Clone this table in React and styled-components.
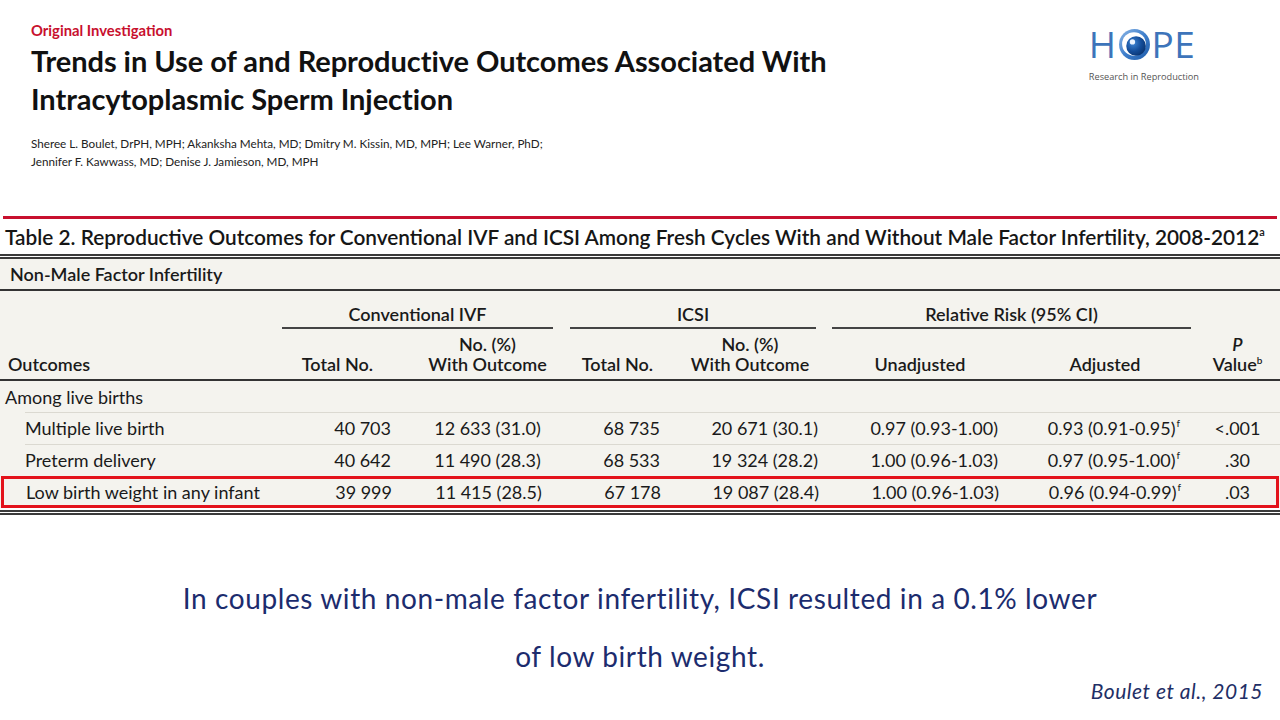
import React from "react";
import styled, { createGlobalStyle } from "styled-components";

const GlobalStyle = createGlobalStyle`
  html, body {
    margin: 0;
    padding: 0;
    background: #fff;
  }
  * {
    box-sizing: border-box;
  }
`;

const COLS = "282px 128px 155px 110px 150px 190px 180px 1fr";

const Slide = styled.div`
  width: 1280px;
  height: 720px;
  overflow: hidden;
  background: #fff;
  font-family: Lato, "Liberation Sans", sans-serif;
  color: #1a1a1a;
`;

const Header = styled.header`
  display: flex;
  justify-content: space-between;
  padding: 20px 81px 0 31px;
  height: 216px;
`;

const Kicker = styled.div`
  color: #c8102e;
  font-weight: 700;
  font-size: 14.8px;
  line-height: 20px;
`;

const Title = styled.h1`
  margin: 2px 0 0;
  font-size: 29px;
  line-height: 38px;
  font-weight: 700;
  letter-spacing: -0.05px;
  color: #111;
`;

const Authors = styled.p`
  margin: 16px 0 0;
  font-size: 11.7px;
  line-height: 18px;
  color: #222;
`;

const Logo = styled.div`
  display: flex;
  flex-direction: column;
  align-items: flex-start;
  padding-top: 4px;
`;

const LogoWord = styled.div`
  display: flex;
  align-items: center;
  height: 40px;
  font-family: "Open Sans", sans-serif;
  font-size: 37px;
  line-height: 40px;
  color: #3d74ba;
  letter-spacing: 0.4px;
`;

const LogoSub = styled.div`
  font-family: "Open Sans", sans-serif;
  font-size: 9.2px;
  line-height: 14px;
  color: #555;
  margin-top: 6px;
`;

const Rule = styled.div`
  height: 3px;
  margin: 0 3px 0 3px;
  background: #c8102e;
`;

const Caption = styled.div`
  margin: 6px 0 0 5px;
  font-size: 20.8px;
  line-height: 24px;
  font-weight: 600;
  color: #161616;
  white-space: nowrap;

  sup {
    font-size: 11px;
    vertical-align: top;
    line-height: 14px;
  }
`;

const TableFrame = styled.div`
  margin-top: 5px;
  border-top: 5px double #3a3a3a;
  border-bottom: 5px double #3a3a3a;
  padding-bottom: 2px;
  background: #fff;
`;

const TableBody = styled.div`
  background: #f4f3ee;
`;

const SectionRow = styled.div`
  height: 32px;
  display: flex;
  align-items: center;
  padding-left: 10px;
  font-weight: 600;
  font-size: 18px;
  border-bottom: 2px solid #333;
`;

const HeadBlock = styled.div`
  border-bottom: 2px solid #333;
`;

const GroupRow = styled.div`
  display: grid;
  grid-template-columns: ${COLS};
  padding-top: 12px;
`;

const Group = styled.div`
  grid-column: span 2;
  margin: 0 ${(p) => p.$mr}px 0 ${(p) => p.$ml}px;
  text-align: center;
  font-weight: 600;
  font-size: 18px;
  line-height: 22px;
  padding-bottom: 2px;
  border-bottom: 2px solid #444;
`;

const SubRow = styled.div`
  display: grid;
  grid-template-columns: ${COLS};
  align-items: end;
  padding: 5px 0;
`;

const HeadCell = styled.div`
  font-weight: 600;
  font-size: 18px;
  line-height: 20px;
  text-align: ${(p) => p.$align || "center"};
  padding-right: ${(p) => p.$pr || 0}px;
  padding-left: ${(p) => p.$pl || 0}px;

  i {
    font-style: italic;
  }
  sup {
    font-size: 10px;
    vertical-align: top;
    line-height: 12px;
  }
`;

const LabelRow = styled.div`
  height: 31px;
  display: flex;
  align-items: center;
  padding-left: 5px;
  font-size: 18px;
`;

const Row = styled.div`
  display: grid;
  grid-template-columns: ${COLS};
  align-items: center;
  height: 32px;
  font-size: 18px;
  background: linear-gradient(#dbd9d1, #dbd9d1) 25px 0 / calc(100% - 25px) 1px
    no-repeat;
  ${(p) =>
    p.$highlight &&
    `
    margin: 0 1px;
    background: none;
    box-shadow: inset 0 0 0 3px #e3121b;
  `}
`;

const Cell = styled.div`
  text-align: ${(p) => p.$align || "right"};
  padding-right: ${(p) => p.$pr || 0}px;
  padding-left: ${(p) => p.$pl || 0}px;
  white-space: nowrap;

  sup {
    font-size: 10px;
    vertical-align: top;
    line-height: 12px;
    margin-left: 1px;
  }
`;

const Summary = styled.p`
  margin: 54px 0 0;
  text-align: center;
  font-size: 28px;
  letter-spacing: 0.6px;
  line-height: 58px;
  color: #1c2c6e;
`;

const Cite = styled.div`
  display: flex;
  justify-content: flex-end;
  padding-right: 17px;
  margin-top: -6px;
  font-size: 21px;
  letter-spacing: 0.5px;
  line-height: 24px;
  font-style: italic;
  color: #1f2f66;
`;

const rows = [
  {
    label: "Multiple live birth",
    c1: "40 703",
    c2: "12 633 (31.0)",
    i1: "68 735",
    i2: "20 671 (30.1)",
    un: "0.97 (0.93-1.00)",
    adj: "0.93 (0.91-0.95)",
    p: "<.001",
  },
  {
    label: "Preterm delivery",
    c1: "40 642",
    c2: "11 490 (28.3)",
    i1: "68 533",
    i2: "19 324 (28.2)",
    un: "1.00 (0.96-1.03)",
    adj: "0.97 (0.95-1.00)",
    p: ".30",
  },
  {
    label: "Low birth weight in any infant",
    c1: "39 999",
    c2: "11 415 (28.5)",
    i1: "67 178",
    i2: "19 087 (28.4)",
    un: "1.00 (0.96-1.03)",
    adj: "0.96 (0.94-0.99)",
    p: ".03",
    highlight: true,
  },
];

function Eye() {
  return (
    <svg width="33" height="33" viewBox="0 0 32 32" style={{ margin: "0 1px" }}>
      <defs>
        <linearGradient id="ring" x1="0" y1="0" x2="1" y2="1">
          <stop offset="0" stopColor="#8db7e6" />
          <stop offset="0.5" stopColor="#3f7fcc" />
          <stop offset="1" stopColor="#1d5aa8" />
        </linearGradient>
        <radialGradient id="pupil" cx="0.35" cy="0.35" r="0.7">
          <stop offset="0" stopColor="#3f86d6" />
          <stop offset="0.6" stopColor="#134c99" />
          <stop offset="1" stopColor="#0b3572" />
        </radialGradient>
      </defs>
      <circle cx="16" cy="16" r="15" fill="url(#ring)" />
      <circle cx="15.5" cy="15.5" r="11.5" fill="#fff" />
      <circle cx="17.5" cy="17.5" r="9.5" fill="url(#pupil)" />
      <circle cx="14" cy="13.5" r="2.6" fill="#eaf3ff" />
    </svg>
  );
}

export default function App() {
  return (
    <>
      <GlobalStyle />
      <Slide>
        <Header>
          <div>
            <Kicker>Original Investigation</Kicker>
            <Title>
              Trends in Use of and Reproductive Outcomes Associated With
              <br />
              Intracytoplasmic Sperm Injection
            </Title>
            <Authors>
              Sheree L. Boulet, DrPH, MPH; Akanksha Mehta, MD; Dmitry M. Kissin,
              MD, MPH; Lee Warner, PhD;
              <br />
              Jennifer F. Kawwass, MD; Denise J. Jamieson, MD, MPH
            </Authors>
          </div>
          <Logo>
            <LogoWord>
              H<Eye />PE
            </LogoWord>
            <LogoSub>Research in Reproduction</LogoSub>
          </Logo>
        </Header>

        <Rule />
        <Caption>
          Table 2. Reproductive Outcomes for Conventional IVF and ICSI Among
          Fresh Cycles With and Without Male Factor Infertility, 2008-2012
          <sup>a</sup>
        </Caption>

        <TableFrame>
          <TableBody>
            <SectionRow>Non-Male Factor Infertility</SectionRow>
            <HeadBlock>
              <GroupRow>
                <div />
                <Group $ml={0} $mr={12}>
                  Conventional IVF
                </Group>
                <Group $ml={5} $mr={9}>
                  ICSI
                </Group>
                <Group $ml={7} $mr={4}>
                  Relative Risk (95% CI)
                </Group>
              </GroupRow>
              <SubRow>
                <HeadCell $align="left" $pl={8}>
                  Outcomes
                </HeadCell>
                <HeadCell $align="right" $pr={37}>
                  Total No.
                </HeadCell>
                <HeadCell>
                  No. (%)
                  <br />
                  With Outcome
                </HeadCell>
                <HeadCell $align="right" $pr={22}>
                  Total No.
                </HeadCell>
                <HeadCell>
                  No. (%)
                  <br />
                  With Outcome
                </HeadCell>
                <HeadCell>Unadjusted</HeadCell>
                <HeadCell>Adjusted</HeadCell>
                <HeadCell>
                  <i>P</i>
                  <br />
                  Value<sup>b</sup>
                </HeadCell>
              </SubRow>
            </HeadBlock>
            <LabelRow>Among live births</LabelRow>
            {rows.map((r) => (
              <Row key={r.label} $highlight={r.highlight}>
                <Cell $align="left" $pl={25}>
                  {r.label}
                </Cell>
                <Cell $pr={19}>{r.c1}</Cell>
                <Cell $align="center">{r.c2}</Cell>
                <Cell $pr={15}>{r.i1}</Cell>
                <Cell $pr={7}>{r.i2}</Cell>
                <Cell $pr={17}>{r.un}</Cell>
                <Cell $pr={15}>
                  {r.adj}
                  <sup>f</sup>
                </Cell>
                <Cell $align="center">{r.p}</Cell>
              </Row>
            ))}
          </TableBody>
        </TableFrame>

        <Summary>
          In couples with non-male factor infertility, ICSI resulted in a 0.1%
          lower
          <br />
          of low birth weight.
        </Summary>
        <Cite>Boulet et al., 2015</Cite>
      </Slide>
    </>
  );
}
